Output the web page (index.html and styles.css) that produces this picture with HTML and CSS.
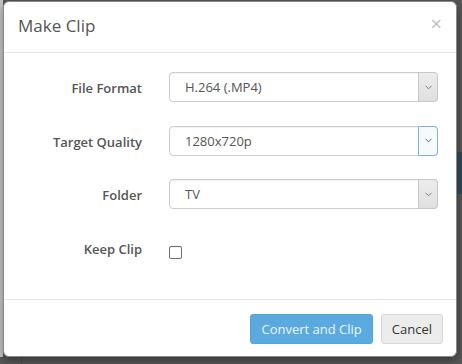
FILE: index.html
```html
<!DOCTYPE html>
<html lang="en">
<head>
<meta charset="utf-8">
<title>Make Clip</title>
<link rel="stylesheet" href="styles.css">
</head>
<body>
<div class="backdrop">
  <div class="modal">
    <div class="modal-header">
      <h4 class="modal-title">Make Clip</h4>
      <button class="close" type="button">×</button>
    </div>
    <div class="modal-body">
      <form class="form">
        <label class="form-label">File Format</label>
        <div class="select">
          <span class="select-value">H.264 (.MP4)</span>
          <span class="select-arrow"><svg width="7" height="5" viewBox="0 0 7 5"><polyline points="0.5,0.8 3.5,3.8 6.5,0.8" fill="none" stroke="#7a7a7a" stroke-width="1"/></svg></span>
        </div>
        <label class="form-label">Target Quality</label>
        <div class="select">
          <span class="select-value">1280x720p</span>
          <span class="select-arrow select-arrow-focus"><svg width="7" height="5" viewBox="0 0 7 5"><polyline points="0.5,0.8 3.5,3.8 6.5,0.8" fill="none" stroke="#6a6a6a" stroke-width="1"/></svg></span>
        </div>
        <label class="form-label">Folder</label>
        <div class="select">
          <span class="select-value">TV</span>
          <span class="select-arrow"><svg width="7" height="5" viewBox="0 0 7 5"><polyline points="0.5,0.8 3.5,3.8 6.5,0.8" fill="none" stroke="#7a7a7a" stroke-width="1"/></svg></span>
        </div>
        <label class="form-label">Keep Clip</label>
        <div class="check-cell"><input class="checkbox" type="checkbox"></div>
      </form>
    </div>
    <div class="modal-footer">
      <button class="btn btn-primary" type="button">Convert and Clip</button>
      <button class="btn btn-default" type="button">Cancel</button>
    </div>
  </div>
</div>
</body>
</html>
```

FILE: styles.css
```css
html, body {
  margin: 0;
  padding: 0;
}

body {
  width: 462px;
  height: 364px;
  overflow: hidden;
  font-family: "Open Sans", "Noto Sans", sans-serif;
  background:
    linear-gradient(#c6c6c6, #c6c6c6) 0 0 / 3px 357px no-repeat,
    linear-gradient(#2f4a61, #2f4a61) 457px 152px / 5px 42px no-repeat,
    linear-gradient(#4c4c4c, #4c4c4c) 21px 357px / 1px 7px no-repeat,
    #575757;
}

.backdrop {
  padding: 1px 0 0 3px;
}

.modal {
  box-sizing: border-box;
  width: 454px;
  height: 356px;
  background: #fff;
  border: 1px solid #8a8a8a;
  border-radius: 6px;
  box-shadow: 0 3px 9px rgba(0, 0, 0, 0.4);
  display: flex;
  flex-direction: column;
}

.modal-header {
  display: flex;
  justify-content: space-between;
  align-items: flex-start;
  padding: 12px 13px 14px 14px;
  border-bottom: 1px solid #e5e5e5;
}

.modal-title {
  margin: 0;
  font-size: 17px;
  font-weight: 400;
  line-height: 24px;
  color: #555;
}

.close {
  margin: -1px 1px 0 0;
  padding: 0;
  border: 0;
  background: none;
  font-family: "Open Sans", sans-serif;
  font-size: 20px;
  font-weight: 400;
  line-height: 21px;
  color: #bdbdbd;
}

.modal-body {
  padding: 19px 18px 36px 15px;
  flex: 1;
}

.form {
  display: grid;
  grid-template-columns: 123px 269px;
  grid-auto-rows: 30px;
  column-gap: 27px;
  row-gap: 23.5px;
  align-items: center;
  margin: 0;
}

.form-label {
  text-align: right;
  font-size: 13px;
  font-weight: 600;
  color: #555;
  padding-top: 2px;
}

.select {
  display: flex;
  height: 30px;
  box-sizing: border-box;
  border: 1px solid #ccc;
  border-radius: 4px;
  box-shadow: inset 0 1px 1px rgba(0, 0, 0, 0.06);
  background: #fff;
}

.select-value {
  flex: 1;
  padding-left: 15px;
  font-size: 13px;
  color: #555;
  line-height: 28px;
}

.select-arrow {
  width: 18px;
  display: flex;
  align-items: center;
  justify-content: center;
  margin: -1px -1px -1px 0;
  border: 1px solid #c8c8c8;
  border-radius: 0 4px 4px 0;
  background: linear-gradient(#ececec, #e0e0e0);
}

.select-arrow-focus {
  border-color: #7fb2e0;
  background: #f7fafd;
}

.check-cell {
  align-self: stretch;
}

.checkbox {
  appearance: none;
  -webkit-appearance: none;
  display: block;
  width: 13px;
  height: 13px;
  margin: 13px 0 0 0;
  box-sizing: border-box;
  border: 1px solid #6e6e6e;
  border-radius: 2px;
  background: #fff;
}

.modal-footer {
  display: flex;
  justify-content: flex-end;
  gap: 8px;
  padding: 14px 13px 12px 15px;
  border-top: 1px solid #e5e5e5;
}

.btn {
  height: 30px;
  box-sizing: border-box;
  padding: 0 10px;
  font-family: "Open Sans", sans-serif;
  font-size: 13px;
  border-radius: 3px;
  border: 1px solid transparent;
}

.btn-primary {
  background: #5aaae0;
  border-color: #55a3d8;
  color: #eef6fc;
}

.btn-default {
  background: #ececec;
  border-color: #d8d8d8;
  color: #333;
}
```
